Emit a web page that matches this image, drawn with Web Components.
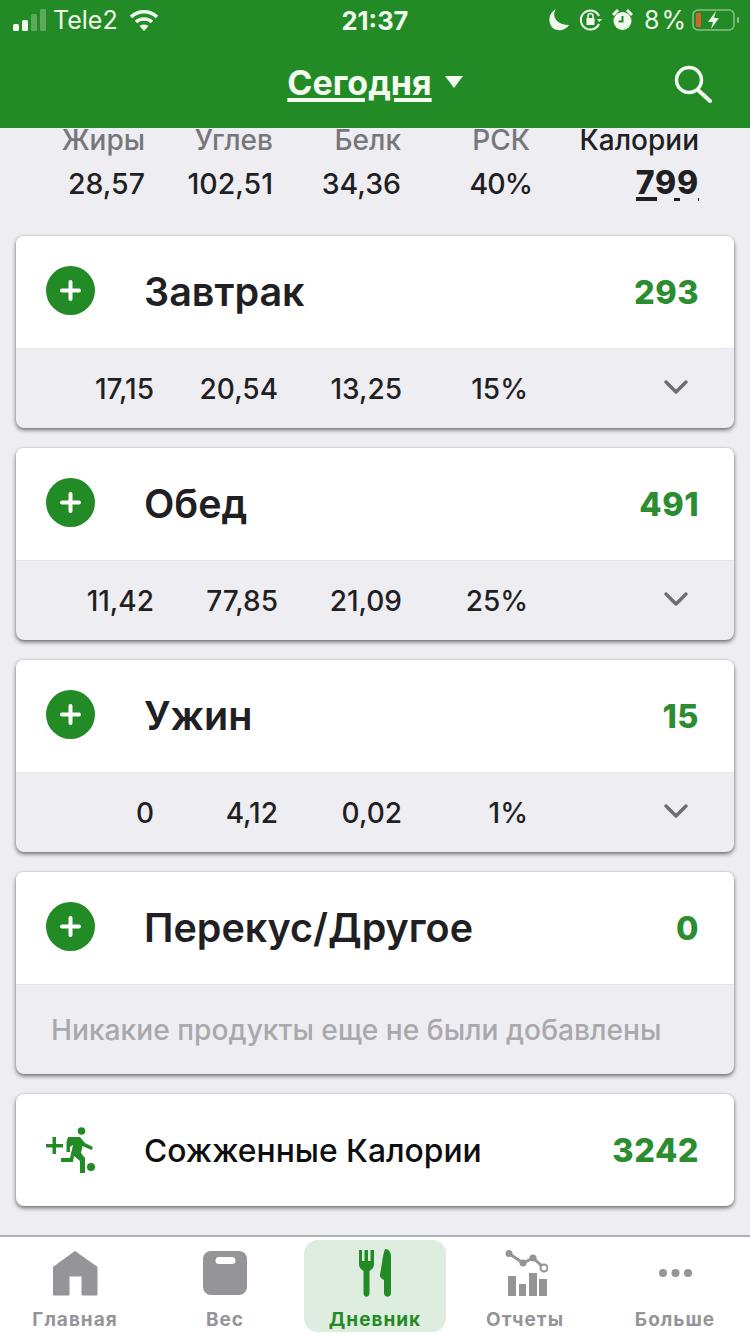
<!DOCTYPE html>
<html lang="ru">
<head>
<meta charset="utf-8">
<title>Дневник</title>
<style>
  html, body { margin: 0; padding: 0; }
  body {
    width: 750px; height: 1334px; overflow: hidden;
    display: flex; flex-direction: column;
    background: #eeedf1;
    font-family: Inter, "Noto Sans", sans-serif;
    color: #1f1f24;
  }
  main { flex: 1; display: flex; flex-direction: column; gap: 20px; padding: 0 16px; }
  svg[slot] { display: block; }
</style>
</head>
<body>
  <status-bar></status-bar>
  <top-header></top-header>
  <macro-summary></macro-summary>
  <main>
    <meal-card name="Завтрак" kcal="293" fat="17,15" carb="20,54" prot="13,25" pct="15%"></meal-card>
    <meal-card name="Обед" kcal="491" fat="11,42" carb="77,85" prot="21,09" pct="25%"></meal-card>
    <meal-card name="Ужин" kcal="15" fat="0" carb="4,12" prot="0,02" pct="1%"></meal-card>
    <meal-card name="Перекус/Другое" kcal="0">Никакие продукты еще не были добавлены</meal-card>
    <burned-card kcal="3242">Сожженные Калории</burned-card>
  </main>
  <tab-bar>
    <tab-item label="Главная">
      <svg slot="icon" width="46" height="46" viewBox="0 0 46 46"><path fill="currentColor" stroke="currentColor" stroke-width="1" stroke-linejoin="round" d="M23 1.500 L45 17 V45 H30 V26 H17 V45 H1.500 V17 Z"/></svg>
    </tab-item>
    <tab-item label="Вес">
      <svg slot="icon" width="46" height="46" viewBox="0 0 46 46"><path fill="currentColor" fill-rule="evenodd" d="M9 1 H37 A8 8 0 0 1 45 9 V37 A8 8 0 0 1 37 45 H9 A8 8 0 0 1 1 37 V9 A8 8 0 0 1 9 1 Z M17 7 A3.500 3.500 0 0 0 17 14 H30 A3.500 3.500 0 0 0 30 7 Z"/></svg>
    </tab-item>
    <tab-item label="Дневник" active>
      <svg slot="icon" width="32" height="48" viewBox="0 0 32 48" style="margin-top:1px"><path fill="currentColor" d="M0 1 H3 V12 H5.500 V1 H9 V12 H11.500 V1 H15 V15 C15 19 12 21 10.500 22 V44 C10.500 49 4.500 49 4.500 44 V22 C3 21 0 19 0 15 Z M26 0 C30 0 32 3 32 8 V44 C32 49 25 49 25 44 V31 C22 30 20.500 28 21 25 C23 18 23 8 26 0 Z"/></svg>
    </tab-item>
    <tab-item label="Отчеты">
      <svg slot="icon" width="46" height="46" viewBox="0 0 46 46"><g fill="currentColor"><rect x="6" y="26" width="8" height="20"/><rect x="17" y="34" width="7" height="12"/><rect x="27" y="23" width="8" height="23"/><rect x="37" y="29" width="8" height="17"/><circle cx="7" cy="3.500" r="3.500"/><circle cx="21" cy="13" r="3.500"/><circle cx="31" cy="8" r="3.500"/></g><path d="M7 3.500 L21 13 L31 8 L40 16" fill="none" stroke="currentColor" stroke-width="3"/><circle cx="42" cy="18" r="3.500" fill="#fff" stroke="currentColor" stroke-width="2"/></svg>
    </tab-item>
    <tab-item label="Больше">
      <svg slot="icon" width="46" height="46" viewBox="0 0 46 46"><g fill="currentColor"><circle cx="11" cy="23" r="4"/><circle cx="23.500" cy="23" r="4"/><circle cx="36" cy="23" r="4"/></g></svg>
    </tab-item>
  </tab-bar>

<script>
//status bar on top of the green header
class StatusBar extends HTMLElement{
    constructor(){
        super();
        this.attachShadow({mode: 'open'}).innerHTML = `
        <style>
        :host{ display: flex; align-items: center; height: 40px; background: #228b26; color: #f1f8ee;
               font-family: Inter, sans-serif; font-size: 25px; position: relative; }
        .left, .right{ flex: 1; display: flex; align-items: center; }
        .left{ padding-left: 13px; gap: 7px; }
        .right{ justify-content: flex-end; padding-right: 10px; gap: 10px; }
        .time{ font-weight: 700; font-size: 25.500px; margin-left: -3px; }
        .pct{ font-size: 25px; word-spacing: -5px; margin-left: 1px; }
        svg{ display: block; }
        </style>
        <div class="left">
          <svg width="33" height="22" viewBox="0 0 33 22"><g fill="#f1f8ee"><rect x="0" y="15" width="6" height="7" rx="1.500"/><rect x="9" y="11" width="6" height="11" rx="1.500"/></g><g fill="#f1f8ee" opacity=".28"><rect x="18" y="5" width="6" height="17" rx="1.500"/><rect x="27" y="0" width="6" height="22" rx="1.500"/></g></svg>
          <span style="margin-right:4px">Tele2</span>
          <svg width="30" height="23" viewBox="0 0 30 23" fill="none" stroke="#f1f8ee" stroke-width="3.500"><path d="M2 8 C9 1 21 1 28 8"/><path d="M7 13 C11 9 19 9 23 13"/><path d="M15 22 L10.500 17 C13 15 17 15 19.500 17 Z" fill="#f1f8ee" stroke="none"/></svg>
        </div>
        <div class="time">21:37</div>
        <div class="right">
          <svg width="20" height="22" viewBox="0 0 20 22"><path fill="#f1f8ee" d="M7 0 C3 5 5 16 20 16 C16 22 9 22 5 20 C-1 16 -2 5 7 0 Z"/></svg>
          <svg width="23" height="22" viewBox="0 0 23 22" fill="none" stroke="#f1f8ee" stroke-width="2"><path d="M20 7 A9.500 9.500 0 1 0 20 15"/><path d="M18 10 L20.500 13 L23 10" fill="#f1f8ee" stroke="none"/><rect x="7.500" y="9" width="8" height="7" fill="#f1f8ee" stroke="none"/><path d="M9 9 V7 A2.500 2.500 0 0 1 14 7 V9" stroke-width="1.500"/></svg>
          <svg width="21" height="22" viewBox="0 0 21 22"><circle cx="10.500" cy="12" r="9" fill="#f1f8ee"/><path d="M1 6 L6 1 M20 6 L15 1" stroke="#f1f8ee" stroke-width="3"/><path d="M10.500 7 V12.500 H6.500" fill="none" stroke="#228b26" stroke-width="2"/></svg>
          <span class="pct">8 %</span>
          <svg width="48" height="22" viewBox="0 0 48 22" style="margin-left:-4px"><rect x="1" y="1" width="41" height="20" rx="5" fill="none" stroke="#f1f8ee" stroke-opacity=".5" stroke-width="1.500"/><rect x="4" y="4" width="5" height="14" rx="1" fill="#d0642a"/><path d="M24 2 L16 13 H21 L19 20 L27 9 H22 Z" fill="#f1f8ee"/><rect x="45" y="8" width="2" height="6" rx="1" fill="#f1f8ee" opacity=".5"/></svg>
        </div>
        `
    }
}

//green title bar with date and search
class TopHeader extends HTMLElement{
    constructor(){
        super();
        this.attachShadow({mode: 'open'}).innerHTML = `
        <style>
        :host{ display: flex; justify-content: center; align-items: center; height: 88px; background: #228b26;
               color: #f4fbf1; font-family: Inter, sans-serif; position: relative; }
        .title{ font-size: 34px; font-weight: 700; text-decoration: underline; text-decoration-thickness: 4px; text-underline-offset: 3px; margin-top: -4px; }
        .arrow{ width: 0; height: 0; border: 9px solid transparent; border-top: 12px solid #f4fbf1; border-bottom: 0; margin: -5px 0 0 13px; }
        svg{ position: absolute; right: 38px; top: 25px; }
        </style>
        <span class="title">Сегодня</span><span class="arrow"></span>
        <svg width="38" height="38" viewBox="0 0 38 38" fill="none" stroke="#f4fbf1" stroke-width="3.500" stroke-linecap="round"><circle cx="15" cy="15" r="12.500"/><path d="M24 25 L36 36" stroke-width="4"/></svg>
        `
    }
}

//totals row under the header
class MacroSummary extends HTMLElement{
    constructor(){
        super();
        this.attachShadow({mode: 'open'}).innerHTML = `
        <style>
        :host{ display: grid; grid-template-columns: 145px 128px 128px 129px 169px; height: 108px; box-sizing: border-box;
               text-align: right; font-family: Inter, sans-serif; grid-template-rows: 34px 44px; }
        .l{ font-size: 28px; font-weight: 500; color: #77767b; line-height: 24px; }
        .v{ font-size: 28.500px; font-weight: 500; color: #1f1f24; line-height: 44px; }
        .dark{ color: #1f1f24; }
        .pct{ letter-spacing: -1px; margin-right: -2px; }
        .cal span{ display: inline-block; height: 36px; margin-top: 3px; line-height: 36px;
               font-size: 32px; font-weight: 800; letter-spacing: .8px;
               /* the underline is broken in the original: a bar under the 7 and specks under the nines */
               background:
                 linear-gradient(#1f1f24,#1f1f24) 0 32px / 21px 4px no-repeat,
                 linear-gradient(#1f1f24,#1f1f24) 38px 33px / 6px 3px no-repeat,
                 linear-gradient(#1f1f24,#1f1f24) 62px 33px / 2px 3px no-repeat; }
        </style>
        <div class="l">Жиры</div><div class="l">Углев</div><div class="l">Белк</div><div class="l">РСК</div><div class="l dark">Калории</div>
        <div class="v">28,57</div><div class="v">102,51</div><div class="v">34,36</div><div class="v pct">40%</div><div class="v cal"><span>799</span></div>
        `
    }
}

//one meal: head with add button, foot with numbers or a slotted note
class MealCard extends HTMLElement{
    constructor(){
        super();
        const hasNumbers = this.hasAttribute('fat')
        const foot = hasNumbers ? `
          <div class="foot nums">
            <span>${this.getAttribute('fat')}</span><span>${this.getAttribute('carb')}</span>
            <span>${this.getAttribute('prot')}</span><span>${this.getAttribute('pct')}</span>
            <svg width="26" height="16" viewBox="0 0 26 16" fill="none" stroke="#6f6e73" stroke-width="3.500" stroke-linecap="round" stroke-linejoin="round"><path d="M3 3 L13 13 L23 3"/></svg>
          </div>` : `<div class="foot note"><slot></slot></div>`

        this.attachShadow({mode: 'open'}).innerHTML = `
        <style>
        :host{ display: block; border-radius: 8px; overflow: hidden; box-shadow: 0 2px 4px rgba(0,0,0,.55), 0 0 2px rgba(0,0,0,.12);
               background: #eeedf1; font-family: Inter, sans-serif; }
        .head{ display: flex; align-items: center; height: 113px; background: #fff; padding: 0 35px 0 30px; border-bottom: 1px solid #e6e5e9; box-sizing: border-box; }
        .add{ width: 49px; height: 49px; border-radius: 50%; background: #228b26; display: flex; align-items: center; justify-content: center; margin: -3px 49px 0 0; }
        .name{ flex: 1; font-size: 39.500px; font-weight: 600; color: #1f1f24; }
        .kcal{ font-size: 32.500px; font-weight: 800; color: #2b8d30; letter-spacing: .5px; }
        .foot{ font-size: 28px; font-weight: 500; color: #1f1f24; }
        .nums{ display: grid; grid-template-columns: 138px 124px 124px 126px 148px; height: 79px; align-items: center; text-align: right; }
        .nums svg{ justify-self: end; margin-right: -13px; margin-top: -3px; }
        .note{ height: 89px; display: flex; align-items: center; padding-left: 35px; color: #a9a8ad; font-size: 28.200px; font-weight: 500; }
        </style>
        <div class="head">
          <div class="add"><svg width="21" height="21" viewBox="0 0 21 21"><path d="M10.500 2 V19 M2 10.500 H19" stroke="#fff" stroke-width="4" stroke-linecap="round"/></svg></div>
          <div class="name">${this.getAttribute('name')}</div>
          <div class="kcal">${this.getAttribute('kcal')}</div>
        </div>
        ${foot}
        `
    }
}

//burned calories row
class BurnedCard extends HTMLElement{
    constructor(){
        super();
        this.attachShadow({mode: 'open'}).innerHTML = `
        <style>
        :host{ display: flex; align-items: center; height: 112px; background: #fff; border-radius: 8px; padding: 0 35px 0 30px;
               box-shadow: 0 2px 4px rgba(0,0,0,.55), 0 0 2px rgba(0,0,0,.12); font-family: Inter, sans-serif; }
        svg{ margin-right: 49px; display: block; }
        .name{ flex: 1; font-size: 31.800px; font-weight: 500; color: #0e0e10; }
        .kcal{ font-size: 32.500px; font-weight: 800; color: #2b8d30; letter-spacing: .5px; }
        </style>
        <svg width="49" height="46" viewBox="0 0 49 46">
          <g fill="#228b26">
            <path d="M0 17 H6.500 V10 H10 V17 H17 V20.500 H10 V27 H6.500 V20.500 H0 Z"/>
            <circle cx="35.500" cy="4" r="3.800"/>
            <path d="M22 10 H34 L39 16 L47 20 L45.500 23 L36.500 19 L35 26 L39 31 V46 H34 V34 L28 29 L27 35 H15 V31 H24 L27 18 L24 20 V25 H20.500 V15 Z"/>
            <circle cx="45" cy="40" r="4"/>
          </g>
        </svg>
        <div class="name"><slot></slot></div>
        <div class="kcal">${this.getAttribute('kcal')}</div>
        `
    }
}

//bottom navigation
class TabBar extends HTMLElement{
    constructor(){
        super();
        this.attachShadow({mode: 'open'}).innerHTML = `
        <style>
        :host{ display: grid; grid-template-columns: repeat(5, 150px); height: 99px; box-sizing: border-box; background: #fff;
               border-top: 2px solid #b2b1b5; margin-top: 29px; padding: 3px 0 4px; font-family: Inter, sans-serif; }
        </style>
        <slot></slot>
        `
    }
}

class TabItem extends HTMLElement{
    constructor(){
        super();
        this.attachShadow({mode: 'open'}).innerHTML = `
        <style>
        :host{ display: flex; flex-direction: column; align-items: center; color: #959499; }
        :host([active]){ color: #228b26; background: #deeddf; border-radius: 14px; margin: 0 4px; }
        .icon{ height: 56px; padding-top: 10px; box-sizing: border-box; display: flex; align-items: flex-start; }
        :host([active]) .icon{ padding-top: 8px; }
        .label{ font-size: 19px; font-weight: 700; letter-spacing: 1px; line-height: 24px; margin-top: 12px; }
        </style>
        <div class="icon"><slot name="icon"></slot></div>
        <div class="label">${this.getAttribute('label')}</div>
        `
    }
}

customElements.define('status-bar', StatusBar)
customElements.define('top-header', TopHeader)
customElements.define('macro-summary', MacroSummary)
customElements.define('meal-card', MealCard)
customElements.define('burned-card', BurnedCard)
customElements.define('tab-bar', TabBar)
customElements.define('tab-item', TabItem)
</script>
</body>
</html>
